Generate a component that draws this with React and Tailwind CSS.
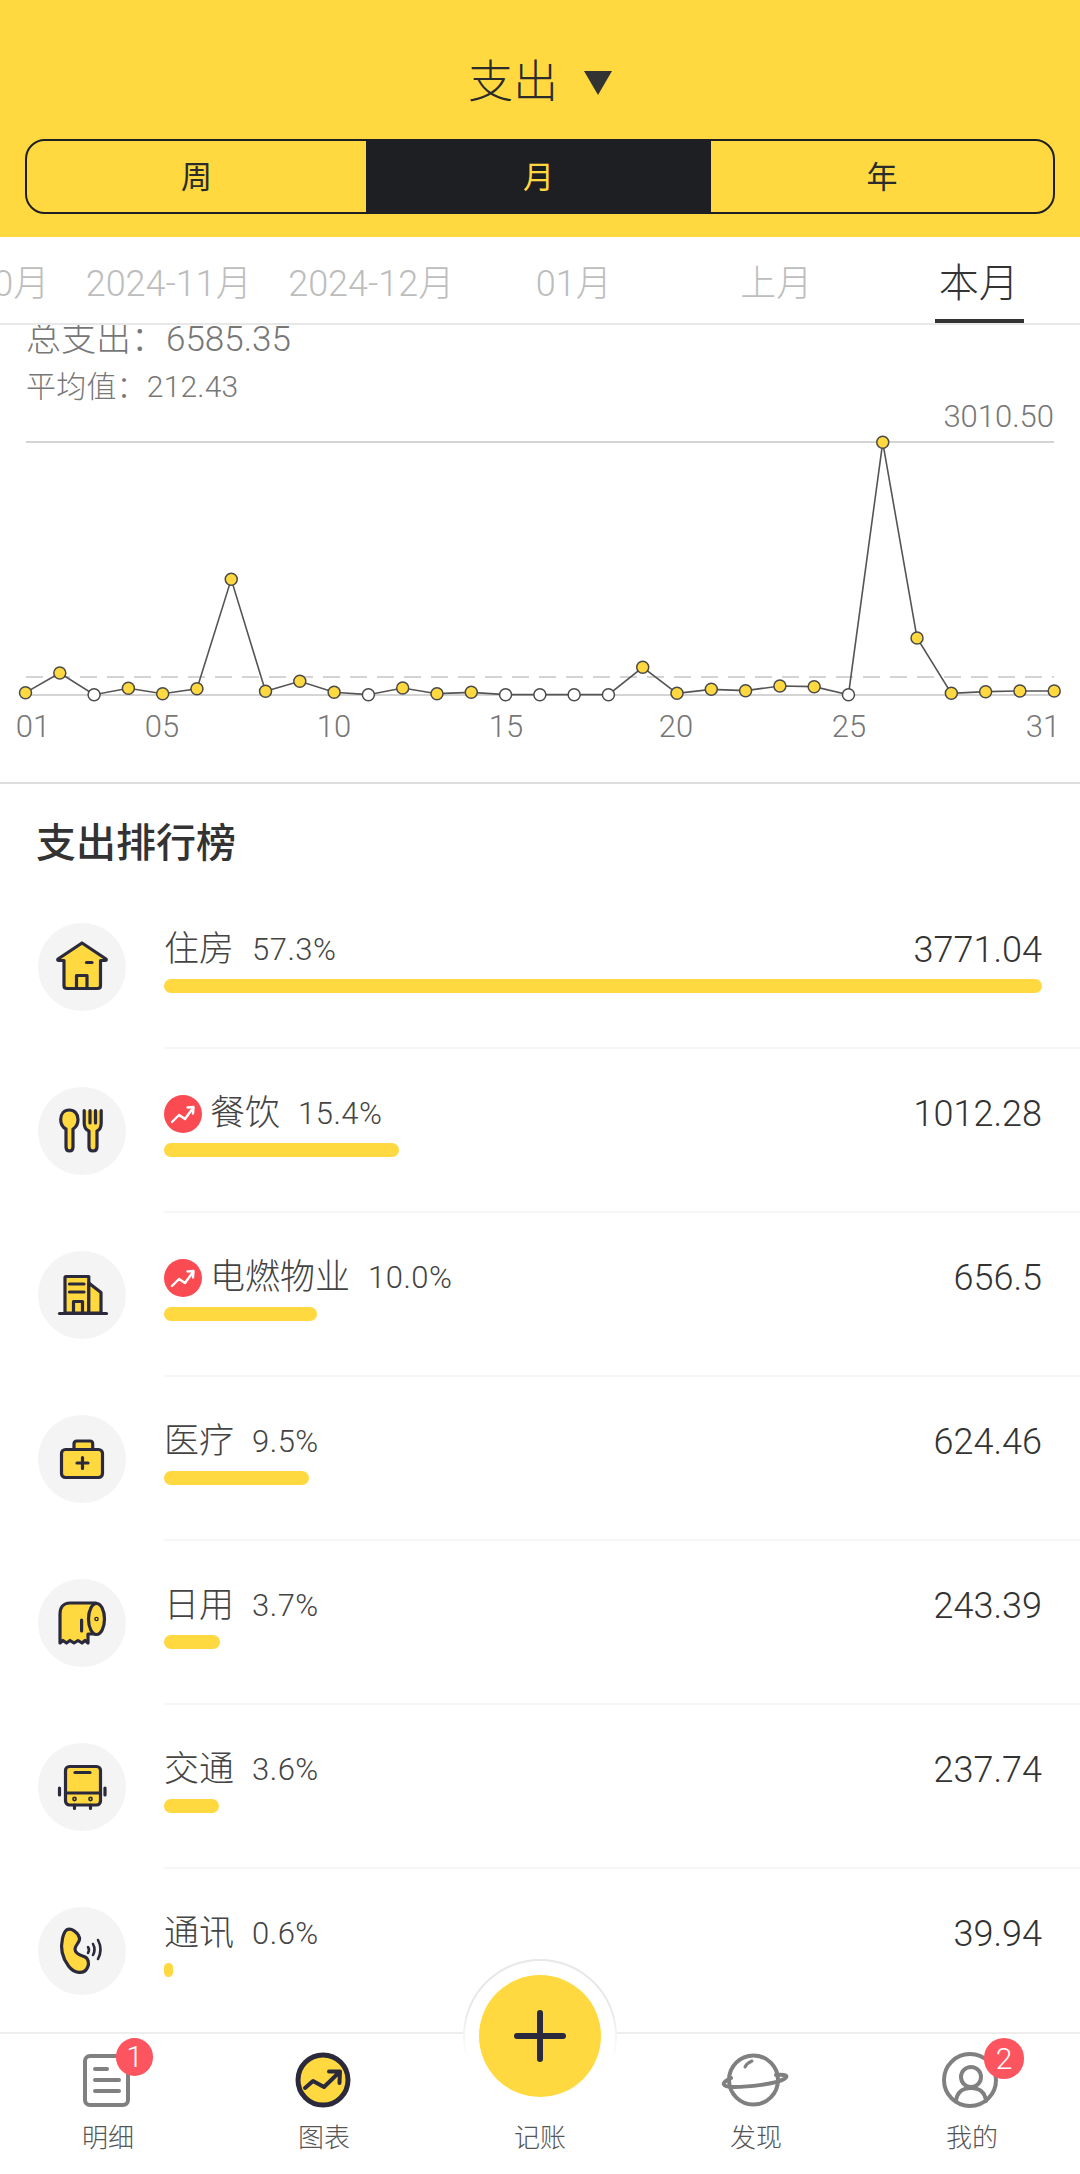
import React from "react";

const Y = "#ffd93f";
const N = "#2a2a3c";

const ys = [878,819,884,865,881,866,538,874,844,877,884,864,881,877,884,884,884,884,802,880,868,872,858,860,884,127,714,880,875,873,873];
const pts = ys.map((v, i) => [25.5 + i * 34.29, 400 + v / 3, v === 884]);

const Stroke = { stroke: N, strokeWidth: 3.2, strokeLinejoin: "round", strokeLinecap: "round" };

const icons = {
  house: (
    <g {...Stroke} fill={Y}>
      <path d="M44 20 L68 36 Q69 37.5 67 37.5 L62.5 37.5 L62.5 62.5 Q62.5 65.5 59.5 65.5 L29 65.5 Q26 65.5 26 62.5 L26 37.5 L21 37.5 Q19 37.5 20 36 Z" />
      <path d="M38.5 65.5 V52.5 H49 V65.5" fill="none" />
      <path d="M48.5 39.5 H54" fill="none" />
    </g>
  ),
  food: (
    <g {...Stroke} fill={Y}>
      <path d="M31.3 23 C36.5 23 40 27 40 32.5 C40 37.5 37.5 40.5 35 42 V60 C35 62.5 33.5 64 31.5 64 C29.5 64 28 62.5 28 60 V42 C25 40.5 22.7 37.5 22.7 32.5 C22.7 27 26 23 31.3 23 Z" />
      <path d="M46.2 23.5 V36 C46.2 40.5 48 43 51 44 V60 C51 62.5 52.7 64 55 64 C57.3 64 59 62.5 59 60 V44 C61.5 43 63.2 40.5 63.2 36 V23.5 M52 23.5 V36 M57.5 23.5 V36" />
    </g>
  ),
  building: (
    <g {...Stroke} fill={Y}>
      <path d="M27 62 V26.5 Q27 25.5 28 25.5 H50.8 V62 Z" />
      <path d="M50.8 32 L63 41.5 V62 H50.8 Z" />
      <path d="M31.5 33 H46 M31.5 41 H46" fill="none" />
      <path d="M35.5 62 V50.5 H44.5 V62" fill="none" />
      <path d="M21.5 62.5 H68.5" fill="none" />
    </g>
  ),
  med: (
    <g {...Stroke} fill={Y}>
      <path d="M36 35 V29 Q36 26 39 26 H52 Q54.7 26 54.7 29 V35" />
      <rect x="23.5" y="34.5" width="41" height="28" rx="4" />
      <path d="M39 48 H50 M44.5 42.5 V53.5" fill="none" />
    </g>
  ),
  paper: (
    <g {...Stroke} fill={Y}>
      <path d="M58 24 H32 C25 24 22 29 22 35 V64 L25 61.5 L28.5 64 L32 61.5 L36 64 L40 61.5 L44 64 L47 61.5 L50 64 V55 H58 Z" />
      <ellipse cx="58.5" cy="40" rx="8" ry="15.5" />
      <circle cx="58.5" cy="40" r="0.7" />
      <path d="M43.6 41 V52" fill="none" />
    </g>
  ),
  bus: (
    <g {...Stroke} fill={Y}>
      <rect x="27.5" y="23.5" width="35" height="38.5" rx="4" />
      <path d="M27.5 50 H62.5" fill="none" />
      <path d="M37 29.5 H52" fill="none" />
      <path d="M36.5 62 V65.5 M52.5 62 V65.5" fill="none" />
      <circle cx="36.5" cy="56" r="0.8" />
      <circle cx="52.5" cy="56" r="0.8" />
      <path d="M21.5 45 V52 M67 45 V52" fill="none" />
    </g>
  ),
  phone: (
    <g {...Stroke} fill={Y}>
      <path d="M28.5 23 C33 20.5 40 25 41.5 31 C42.5 35 37 38 37 42 C37 47 43 48.5 46 49.5 C50.5 51 51.5 56.5 49.5 60.5 C46 68 36 66.5 30.5 59 C24 50.5 22.5 40 24.5 31.5 C25.5 27 26.5 24.5 28.5 23 Z" />
      <path d="M50 40 Q52 43 50 46 M55 37 Q58 42.5 55 48 M60 33 Q65 42.5 60 52" fill="none" strokeWidth="2.6" />
    </g>
  ),
};

const rows = [
  { icon: "house", name: "住房", pct: "57.3%", amt: "3771.04", w: 878 },
  { icon: "food", name: "餐饮", pct: "15.4%", amt: "1012.28", w: 235, trend: true },
  { icon: "building", name: "电燃物业", pct: "10.0%", amt: "656.5", w: 153, trend: true },
  { icon: "med", name: "医疗", pct: "9.5%", amt: "624.46", w: 145 },
  { icon: "paper", name: "日用", pct: "3.7%", amt: "243.39", w: 56 },
  { icon: "bus", name: "交通", pct: "3.6%", amt: "237.74", w: 55 },
  { icon: "phone", name: "通讯", pct: "0.6%", amt: "39.94", w: 9 },
];

function Trend() {
  return (
    <span className="w-[38px] h-[38px] rounded-full bg-[#fa4b53] shrink-0 mr-[8px] flex">
      <svg viewBox="0 0 38 38" className="w-[38px] h-[38px]" fill="none" stroke="#fff" strokeWidth="2.4" strokeLinecap="round" strokeLinejoin="round">
        <path d="M8 27 L15 20 L21 24 L29 13 M23.5 12.5 L29.5 12 L29 18.5" />
      </svg>
    </span>
  );
}

function Row({ r, last }) {
  return (
    <div className="flex h-[164px] shrink-0">
      <div className="w-[88px] h-[88px] rounded-full bg-[#f4f4f4] ml-[38px] mt-[38px] shrink-0 flex">
        <svg viewBox="0 0 88 88" className="w-[88px] h-[88px]">{icons[r.icon]}</svg>
      </div>
      <div className={`ml-[38px] flex-1 pt-[42px] pr-[38px] border-b-2 ${last ? "border-transparent" : "border-[#f6f6f6]"}`}>
        <div className="flex items-center h-[46px] mb-[6px]">
          {r.trend && <Trend />}
          <span className="text-[35px] leading-[46px] text-[#444] font-light">{r.name}</span>
          <span className="text-[31px] leading-[46px] text-[#444] font-light tracking-[0.5px] ml-[18px]">{r.pct}</span>
          <span className="ml-auto text-[36px] leading-[46px] text-[#333] font-light">{r.amt}</span>
        </div>
        <div className="h-[14px] rounded-full bg-[#ffd93f]" style={{ width: r.w }} />
      </div>
    </div>
  );
}

const axis = [["01", 33], ["05", 162], ["10", 334], ["15", 506], ["20", 676], ["25", 849], ["31", 1043]];

function Chart() {
  return (
    <div className="relative h-[379px] border-b-2 border-[#dedede]">
      <svg viewBox="0 405 1080 377" className="absolute left-0 top-0 w-[1080px] h-[377px]">
        <line x1="26" x2="1054" y1="442" y2="442" stroke="#d4d4d4" strokeWidth="2" />
        <line x1="26" x2="1054" y1="695" y2="695" stroke="#d4d4d4" strokeWidth="2" />
        <line x1="26" x2="1054" y1="677" y2="677" stroke="#d4d4d4" strokeWidth="2" strokeDasharray="17 10" />
        <polyline points={pts.map((p) => `${p[0]},${p[1]}`).join(" ")} fill="none" stroke="#555" strokeWidth="1.6" />
        {pts.map((p, i) => (
          <circle key={i} cx={p[0]} cy={p[1]} r="6" fill={p[2] ? "#fff" : Y} stroke="#4a4a4a" strokeWidth="1.5" />
        ))}
      </svg>
      <span className="absolute right-[26px] top-[-3px] text-[31px] leading-[30px] text-[#777] font-light">3010.50</span>
      {axis.map(([t, x]) => (
        <span key={t} className="absolute top-[307px] w-[60px] ml-[-30px] text-center text-[31px] leading-[30px] text-[#777] font-light" style={{ left: x }}>
          {t}
        </span>
      ))}
    </div>
  );
}

const monthTabs = ["2024-10月", "2024-11月", "2024-12月", "01月", "上月"];

function Badge({ n, cls }) {
  return (
    <span className={`absolute top-[4px] rounded-full bg-[#fc5560] text-white flex items-center justify-center text-[30px] leading-none font-light ${cls}`}>{n}</span>
  );
}

function TabLabel({ children }) {
  return <span className="mt-[13px] text-[26px] leading-[30px] text-[#555] font-light">{children}</span>;
}

export default function App() {
  return (
    <div className="w-[1080px] h-[2174px] flex flex-col overflow-hidden bg-white [font-family:'Roboto','Noto_Sans_CJK_SC',sans-serif]">
      <header className="h-[237px] shrink-0 bg-[#ffd93f] flex flex-col items-center pt-[58px] relative z-10">
        <div className="flex items-center h-[50px]">
          <span className="text-[45px] leading-[50px] text-[#2b2b2b] font-light">支出</span>
          <svg viewBox="0 0 28 24" className="w-[28px] h-[24px] ml-[26px]"><path d="M0 0 H28 L14 24 Z" fill="#333" /></svg>
        </div>
        <div className="mt-[31px] w-[1030px] h-[75px] border-2 border-[#1e1f23] rounded-[20px] overflow-hidden grid grid-cols-[339px_345px_1fr]">
          <div className="flex items-center justify-center pt-[3px] text-[31px] text-[#2b2b2b]">周</div>
          <div className="flex items-center justify-center pt-[3px] text-[31px] text-[#ffd93f] bg-[#1e1f23]">月</div>
          <div className="flex items-center justify-center pt-[3px] text-[31px] text-[#2b2b2b]">年</div>
        </div>
      </header>

      <nav className="h-[88px] shrink-0 bg-white border-b-2 border-[#e8e8e8] flex justify-end overflow-hidden relative z-10">
        {monthTabs.map((t) => (
          <div key={t} className="w-[202.5px] shrink-0 flex items-center justify-center pt-[8px] text-[36px] text-[#bdbdbd] font-light">{t}</div>
        ))}
        <div className="w-[202.5px] shrink-0 flex items-center justify-center pt-[7px] text-[40px] text-[#333] font-light relative">
          本月
          <span className="absolute bottom-0 left-[57px] w-[89px] h-[4px] bg-[#333]" />
        </div>
      </nav>

      <main className="flex-1 overflow-hidden">
        <div className="mt-[-5px] px-[26px] text-[35px] leading-[40px] text-[#777] font-light">总支出：6585.35</div>
        <div className="mt-[9px] px-[26px] text-[30px] leading-[36px] text-[#777] font-light tracking-[0.2px]">平均值：212.43</div>
        <Chart />
        <h2 className="pt-[36px] pb-[17px] pl-[36px] text-[40px] leading-[48px] font-medium text-[#333]">支出排行榜</h2>
        {rows.map((r, i) => (
          <Row key={r.name} r={r} last={i === rows.length - 1} />
        ))}
      </main>

      <footer className="h-[142px] shrink-0 bg-white border-t-2 border-[#eeeeee] grid grid-cols-5 relative z-10">
        <div className="relative flex flex-col items-center pt-[16px]">
          <svg viewBox="0 0 60 60" className="w-[60px] h-[60px]" fill="none" stroke="#808080" strokeWidth="4" strokeLinecap="round">
            <rect x="7" y="6" width="43" height="49" rx="5" />
            <path d="M17 19 H29 M17 30 H41 M17 41 H41" />
          </svg>
          <Badge n="1" cls="left-[116px] w-[37px] h-[38px]" />
          <TabLabel>明细</TabLabel>
        </div>
        <div className="relative flex flex-col items-center pt-[16px]">
          <svg viewBox="0 0 60 60" className="w-[60px] h-[60px]" fill="none" strokeLinecap="round" strokeLinejoin="round">
            <circle cx="29" cy="30" r="25" fill={Y} stroke={N} strokeWidth="5" />
            <path d="M11 38 L19 31 L30 37 L45.5 22 M35 21.5 L46 21.5 L45.5 33" stroke={N} strokeWidth="4" />
          </svg>
          <TabLabel>图表</TabLabel>
        </div>
        <div className="relative flex flex-col items-center pt-[76px]">
          <div className="absolute top-[-75px] left-1/2 -translate-x-1/2 w-[154px] h-[154px] rounded-full bg-[linear-gradient(#e8e8e8_30%,#ffffff_66%)] flex items-center justify-center">
            <div className="w-[150px] h-[150px] rounded-full bg-white flex items-center justify-center">
              <div className="w-[122px] h-[122px] rounded-full bg-[#ffd93f] flex items-center justify-center">
                <svg viewBox="0 0 52 52" className="w-[52px] h-[52px]" stroke={N} strokeWidth="6" strokeLinecap="round">
                  <path d="M3 26 H49 M26 3 V49" />
                </svg>
              </div>
            </div>
          </div>
          <TabLabel>记账</TabLabel>
        </div>
        <div className="relative flex flex-col items-center pt-[16px]">
          <svg viewBox="0 0 60 60" className="w-[60px] h-[60px] overflow-visible" fill="none" stroke="#808080" strokeWidth="4" strokeLinecap="round">
            <circle cx="27.5" cy="30" r="24.5" />
            <path d="M5 28 C-6 33 -4 37 8 37 C22 37 50 34 58 29 C63 26 60 24 50 25" />
            <path d="M19 17 Q21 13 26 11" strokeWidth="3" />
          </svg>
          <TabLabel>发现</TabLabel>
        </div>
        <div className="relative flex flex-col items-center pt-[16px]">
          <svg viewBox="0 0 60 60" className="w-[60px] h-[60px]" fill="none" stroke="#808080" strokeWidth="4" strokeLinecap="round">
            <circle cx="28" cy="30" r="26" />
            <circle cx="29" cy="27" r="10" />
            <path d="M14 51 C15 42 21 38 29 38 C37 38 43 42 44 51" />
          </svg>
          <Badge n="2" cls="left-[120px] w-[40px] h-[41px]" />
          <TabLabel>我的</TabLabel>
        </div>
      </footer>
    </div>
  );
}
